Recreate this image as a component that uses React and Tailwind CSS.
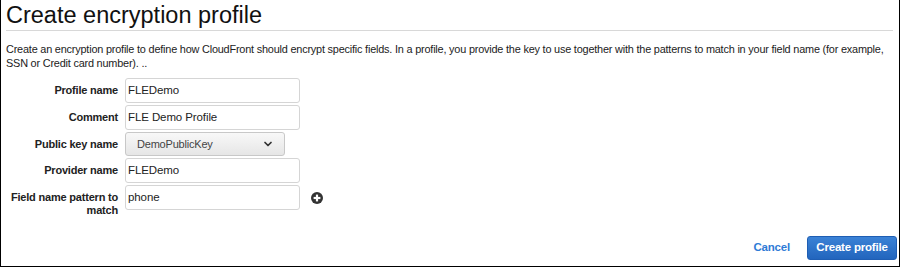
import { ChevronDown } from "lucide-react";

function Row({ label, children }) {
  return (
    <div className="flex items-start">
      <div className="w-[117px] shrink-0 whitespace-nowrap text-right font-bold text-[11px] tracking-[-0.2px] leading-[13px] text-[#222] pt-[6px]">
        {label}
      </div>
      <div className="ml-[7px] flex items-center">{children}</div>
    </div>
  );
}

function TextInput({ value }) {
  return (
    <div className="w-[175px] h-[25px] border border-[#d5d5d5] rounded-[3px] bg-white px-[2px] flex items-center text-[11.5px] tracking-[-0.1px] text-[#222]">
      {value}
    </div>
  );
}

export default function App() {
  return (
    <div
      className="w-[900px] h-[267px] bg-white border-x border-b border-black flex flex-col"
      style={{ fontFamily: '"Liberation Sans", Arial, sans-serif' }}
    >
      <div className="px-[5px]">
        <h1 className="text-[23.5px] leading-[28px] text-[#111] pt-[1px]">
          Create encryption profile
        </h1>
        <div className="h-px bg-[#d8d8d8] mt-[1px] mr-[1px]" />
        <p className="text-[10.9px] tracking-[-0.2px] leading-[14px] text-[#222] mt-[11px] whitespace-nowrap">
          Create an encryption profile to define how CloudFront should encrypt
          specific fields. In a profile, you provide the key to use together
          with the patterns to match in your field name (for example,
          <br />
          SSN or Credit card number). ..
        </p>
      </div>

      <div className="flex flex-col gap-[2px] mt-[8px]">
        <Row label="Profile name">
          <TextInput value="FLEDemo" />
        </Row>
        <Row label="Comment">
          <TextInput value="FLE Demo Profile" />
        </Row>
        <Row label="Public key name">
          <div className="w-[160px] h-[24px] border border-[#c8c8c8] rounded-[3px] bg-gradient-to-b from-[#f8f8f8] to-[#e6e6e6] pl-[11px] pr-[10px] flex items-center justify-between text-[11px] tracking-[-0.2px] text-[#444]">
            <span>DemoPublicKey</span>
            <ChevronDown size={12} strokeWidth={3.5} className="text-[#333]" />
          </div>
        </Row>
        <Row label="Provider name">
          <TextInput value="FLEDemo" />
        </Row>
        <Row
          label={
            <>
              Field name pattern to
              <br />
              match
            </>
          }
        >
          <TextInput value="phone" />
          <svg width="12" height="12" viewBox="0 0 12 12" className="ml-[11px]">
            <circle cx="6" cy="6" r="6" fill="#333" />
            <rect x="2.6" y="4.9" width="6.8" height="2.2" fill="#fff" />
            <rect x="4.9" y="2.6" width="2.2" height="6.8" fill="#fff" />
          </svg>
        </Row>
      </div>

      <div className="flex-1" />
      <div className="flex items-center justify-end pr-[2px] pb-[6px] gap-[17px]">
        <span className="text-[11.5px] tracking-[-0.2px] font-bold text-[#2f7bd6]">
          Cancel
        </span>
        <button className="h-[24px] w-[90px] rounded-[3px] bg-gradient-to-b from-[#3b82d6] to-[#2265bd] border border-[#1f5eb3] text-white text-[11.5px] tracking-[-0.2px] font-bold">
          Create profile
        </button>
      </div>
    </div>
  );
}
